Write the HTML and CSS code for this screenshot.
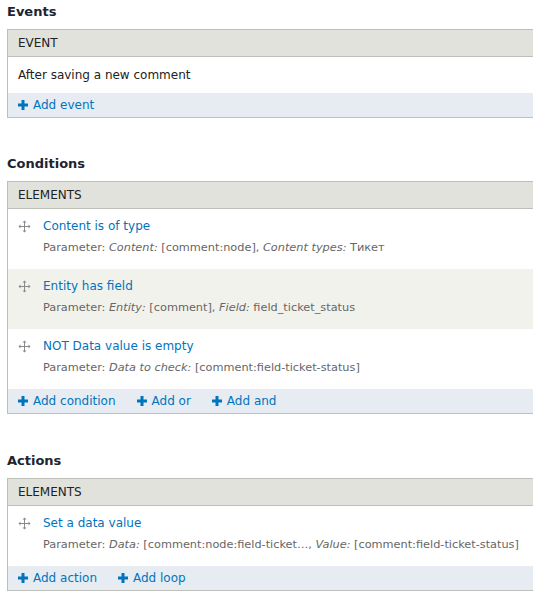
FILE: index.html
```html
<!DOCTYPE html>
<html>
<head>
<meta charset="utf-8">
<link rel="stylesheet" href="styles.css">
</head>
<body>
<div class="page">
  <section class="section">
    <h2 class="heading">Events</h2>
    <div class="table">
      <div class="thead">EVENT</div>
      <div class="row row-simple">After saving a new comment</div>
      <div class="add-row">
        <a class="add"><svg class="plus" viewBox="0 0 10 10"><rect x="3.5" y="0" width="3" height="10"/><rect x="0" y="3.5" width="10" height="3"/></svg>Add event</a>
      </div>
    </div>
  </section>

  <section class="section section-gap">
    <h2 class="heading">Conditions</h2>
    <div class="table">
      <div class="thead">ELEMENTS</div>
      <div class="row">
        <svg class="drag" viewBox="0 0 13 13"><path d="M6.5 0.5L4.5 2.5H6V6H2.5V4.5L0.5 6.5L2.5 8.5V7H6V10.5H4.5L6.5 12.5L8.5 10.5H7V7H10.5V8.5L12.5 6.5L10.5 4.5V6H7V2.5H8.5Z"/></svg>
        <div class="content">
          <a class="title">Content is of type</a>
          <div class="param">Parameter: <em>Content:</em> [comment:node], <em>Content types:</em> Тикет</div>
        </div>
      </div>
      <div class="row row-alt">
        <svg class="drag" viewBox="0 0 13 13"><path d="M6.5 0.5L4.5 2.5H6V6H2.5V4.5L0.5 6.5L2.5 8.5V7H6V10.5H4.5L6.5 12.5L8.5 10.5H7V7H10.5V8.5L12.5 6.5L10.5 4.5V6H7V2.5H8.5Z"/></svg>
        <div class="content">
          <a class="title">Entity has field</a>
          <div class="param">Parameter: <em>Entity:</em> [comment], <em>Field:</em> field_ticket_status</div>
        </div>
      </div>
      <div class="row">
        <svg class="drag" viewBox="0 0 13 13"><path d="M6.5 0.5L4.5 2.5H6V6H2.5V4.5L0.5 6.5L2.5 8.5V7H6V10.5H4.5L6.5 12.5L8.5 10.5H7V7H10.5V8.5L12.5 6.5L10.5 4.5V6H7V2.5H8.5Z"/></svg>
        <div class="content">
          <a class="title">NOT Data value is empty</a>
          <div class="param">Parameter: <em>Data to check:</em> [comment:field-ticket-status]</div>
        </div>
      </div>
      <div class="add-row">
        <a class="add"><svg class="plus" viewBox="0 0 10 10"><rect x="3.5" y="0" width="3" height="10"/><rect x="0" y="3.5" width="10" height="3"/></svg>Add condition</a>
        <a class="add"><svg class="plus" viewBox="0 0 10 10"><rect x="3.5" y="0" width="3" height="10"/><rect x="0" y="3.5" width="10" height="3"/></svg>Add or</a>
        <a class="add"><svg class="plus" viewBox="0 0 10 10"><rect x="3.5" y="0" width="3" height="10"/><rect x="0" y="3.5" width="10" height="3"/></svg>Add and</a>
      </div>
    </div>
  </section>

  <section class="section section-gap-lg">
    <h2 class="heading">Actions</h2>
    <div class="table">
      <div class="thead">ELEMENTS</div>
      <div class="row">
        <svg class="drag" viewBox="0 0 13 13"><path d="M6.5 0.5L4.5 2.5H6V6H2.5V4.5L0.5 6.5L2.5 8.5V7H6V10.5H4.5L6.5 12.5L8.5 10.5H7V7H10.5V8.5L12.5 6.5L10.5 4.5V6H7V2.5H8.5Z"/></svg>
        <div class="content">
          <a class="title">Set a data value</a>
          <div class="param">Parameter: <em>Data:</em> [comment:node:field-ticket…, <em>Value:</em> [comment:field-ticket-status]</div>
        </div>
      </div>
      <div class="add-row">
        <a class="add"><svg class="plus" viewBox="0 0 10 10"><rect x="3.5" y="0" width="3" height="10"/><rect x="0" y="3.5" width="10" height="3"/></svg>Add action</a>
        <a class="add"><svg class="plus" viewBox="0 0 10 10"><rect x="3.5" y="0" width="3" height="10"/><rect x="0" y="3.5" width="10" height="3"/></svg>Add loop</a>
      </div>
    </div>
  </section>
</div>
</body>
</html>
```

FILE: styles.css
```css
html, body {
  margin: 0;
  padding: 0;
  background: #fff;
  overflow: hidden;
}
body {
  font-family: "DejaVu Sans", Verdana, sans-serif;
  color: #222;
  font-size: 12px;
}
.page {
  padding: 2px 0 0 7px;
  width: 540px;
}
.heading {
  margin: 0 0 8px 0;
  font-size: 13px;
  line-height: 19px;
  font-weight: bold;
  color: #222330;
}
.section-gap {
  margin-top: 36px;
}
.section-gap-lg {
  margin-top: 37px;
}
.table {
  border: 1px solid #bfbfba;
  border-right: none;
}
.thead {
  background: #e1e2dc;
  border-bottom: 1px solid #bfbfba;
  height: 26px;
  line-height: 26px;
  padding: 0 10px;
  font-size: 12px;
  color: #222;
}
.row {
  display: flex;
  align-items: flex-start;
  height: 60px;
  box-sizing: border-box;
  padding: 9px 10px 0 10px;
}
.row-alt {
  background: #f2f2ec;
}
.row-simple {
  display: block;
  height: 36px;
  padding: 9px 10px 0 10px;
  line-height: 18px;
  font-size: 12px;
}
.drag {
  width: 13px;
  height: 13px;
  fill: #8a8a8a;
  margin: 2px 12px 0 0;
  flex: none;
}
.content {
  display: flex;
  flex-direction: column;
}
.title {
  color: #0074bd;
  font-size: 12px;
  line-height: 16px;
}
.param {
  margin-top: 6px;
  font-size: 11.3px;
  line-height: 16px;
  color: #666;
  white-space: nowrap;
}
.param em {
  font-style: italic;
}
.add-row {
  background: #e6ecf2;
  height: 24px;
  display: flex;
  align-items: center;
  gap: 21px;
  padding: 0 10px;
}
.add {
  display: flex;
  align-items: center;
  color: #0074bd;
  font-size: 12px;
  line-height: 18px;
}
.plus {
  width: 10px;
  height: 10px;
  fill: #0074bd;
  margin-right: 5px;
}
```
